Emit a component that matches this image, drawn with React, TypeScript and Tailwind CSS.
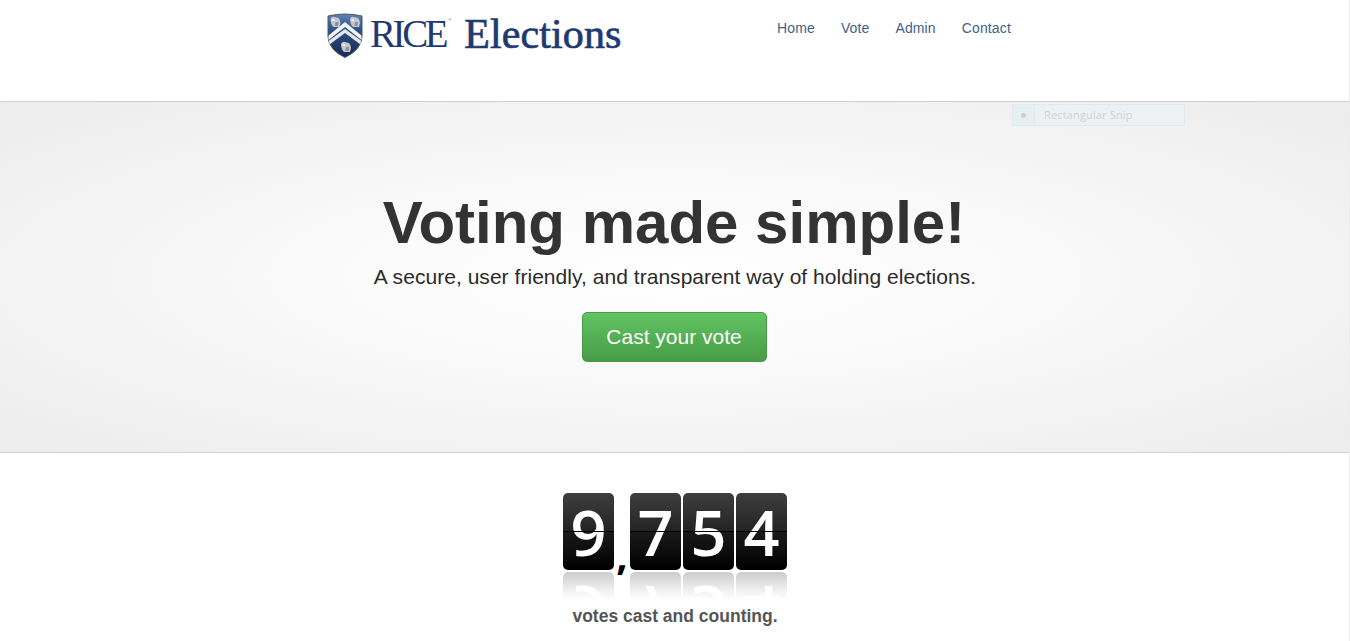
const NAV_LINKS = ['Home', 'Vote', 'Admin', 'Contact'];
const DIGITS_BEFORE = ['9'];
const DIGITS_AFTER = ['7', '5', '4'];

function Owl({ x, y }: { x: number; y: number }) {
  return (
    <g transform={`translate(${x} ${y})`}>
      <path d="M0 2 Q1 -1 4 0 L8 1 Q10 3 10 6 L9 10 L3 10 Q0 7 0 2 Z" fill="#c3c6ca" />
      <path d="M1.500 2 L4 2 L4 4 L1.500 4 Z" fill="#f0f1f2" />
      <path d="M5 5 L8 5 L7.500 9 L4.500 9 Z" fill="#8d9097" />
    </g>
  );
}

function Shield() {
  return (
    <svg width="36" height="45" viewBox="0 0 36 45" className="shrink-0">
      <defs>
        <linearGradient id="shieldBlue" x1="0" y1="0" x2="0" y2="1">
          <stop offset="0" stopColor="#5f82b0" />
          <stop offset="0.4" stopColor="#2a4d86" />
          <stop offset="1" stopColor="#172a50" />
        </linearGradient>
      </defs>
      <path d="M1 3 Q18 -1 35 3 L35 24 Q34 37 18 44.500 Q2 37 1 24 Z" fill="url(#shieldBlue)" stroke="#4d5866" strokeWidth="1" />
      <path d="M1.500 22.500 L18 9 L34.500 22.500 L34.500 27 L18 14 L1.500 27 Z" fill="#f3f4f6" />
      <path d="M2 27.500 L18 16 L34 27.500 L33.500 31.500 L18 20 L2.500 31.500 Z" fill="#e4e7ea" />
      <Owl x={3.500} y={4} />
      <Owl x={23} y={4} />
      <Owl x={14} y={29} />
    </svg>
  );
}

function Logo() {
  return (
    <div className="flex items-center text-[#1f3a70] font-['Liberation_Serif',serif]">
      <Shield />
      <span className="ml-[7px] -mt-[4px] text-[39px] leading-none tracking-[-3.4px] font-normal">RICE</span>
      <span className="text-[4px] self-start mt-[4px] ml-[3px]">®</span>
      <span className="ml-[13px] -mt-[4px] text-[42px] leading-none tracking-[0.1px] [-webkit-text-stroke:0.7px_#1f3a70]">Elections</span>
    </div>
  );
}

function FlipDigit({ value }: { value: string }) {
  return (
    <div className="relative w-[51px] h-[77px] rounded-[5px] bg-[linear-gradient(#3e3e3e,#232323_50%,#1a1a1a_51%,#000000)] flex items-center justify-center [-webkit-box-reflect:below_2px_linear-gradient(transparent_65%,rgba(255,255,255,0.2))]">
      <span className="text-white text-[63px] leading-[77px] font-semibold font-['Open_Sans',sans-serif]">{value}</span>
      <div className="absolute left-0 right-0 top-[38px] h-[1px] bg-black" />
    </div>
  );
}

export default function App() {
  return (
    <div className="min-h-[641px] bg-white font-['Liberation_Sans',Arial,sans-serif] overflow-hidden relative">
      {/* Header */}
      <header className="h-[102px] border-b border-[#cfcfcf] flex">
        <div className="ml-[327px] mt-[13px] h-[45px] w-[296px]">
          <Logo />
        </div>
        <nav className="ml-[154px] mt-[20px] flex gap-[26px] text-[14px] leading-[16px] tracking-[0.13px] text-[#3f618a] h-[16px]">
          {NAV_LINKS.map((link) => (
            <a key={link} href="#">{link}</a>
          ))}
        </nav>
      </header>

      {/* Hero */}
      <section className="relative h-[351px] border-b border-[#d2d2d2] bg-[radial-gradient(ellipse_at_center,#ffffff_0%,#fafafa_35%,#ececec_100%)] flex flex-col items-center">
        <h1 className="mt-[86px] text-[60px] leading-[70px] font-bold text-[#333333] -ml-[2px]">Voting made simple!</h1>
        <p className="mt-[5px] text-[21px] leading-[28px] tracking-[0.04px] text-[#2b2b2b]">A secure, user friendly, and transparent way of holding elections.</p>
        <a href="#" className="mt-[21px] -ml-[2px] w-[185px] h-[50px] rounded-[5px] border border-[#489a49] bg-[linear-gradient(#62c462,#479c47)] text-white text-[21px] flex items-center justify-center">
          Cast your vote
        </a>

        {/* faint snipping tool tooltip left over in the capture */}
        <div className="absolute left-[1012px] top-[2px] w-[173px] h-[22px] border border-[#dfecef] bg-[#eef1f2] flex items-center text-[11px] tracking-[0.15px] text-[#cfd2d4] font-['Open_Sans',sans-serif]">
          <div className="w-[22px] h-full bg-[#e6f0f3] border-r border-[#dfecef] flex items-center justify-center">
            <div className="w-[5px] h-[5px] rounded-full bg-[#c8d0d0]" />
          </div>
          <span className="ml-[9px]">Rectangular Snip</span>
        </div>
      </section>

      {/* Counter */}
      <section className="flex flex-col items-center pt-[40px]">
        <div className="flex items-start">
          {DIGITS_BEFORE.map((d) => (
            <FlipDigit key={d} value={d} />
          ))}
          <span className="w-[16px] text-center mt-[42px] text-[40px] leading-[40px] font-bold text-black font-['Open_Sans',sans-serif]">,</span>
          <div className="flex gap-[2px]">
            {DIGITS_AFTER.map((d) => (
              <FlipDigit key={d} value={d} />
            ))}
          </div>
        </div>
        <p className="mt-[31px] text-[17.5px] leading-[20px] font-bold text-[#555555]">votes cast and counting.</p>
      </section>

      {/* thin line at the window's right edge */}
      <div className="absolute right-0 top-0 bottom-0 w-[1px] bg-[#ececec]" />
    </div>
  );
}
